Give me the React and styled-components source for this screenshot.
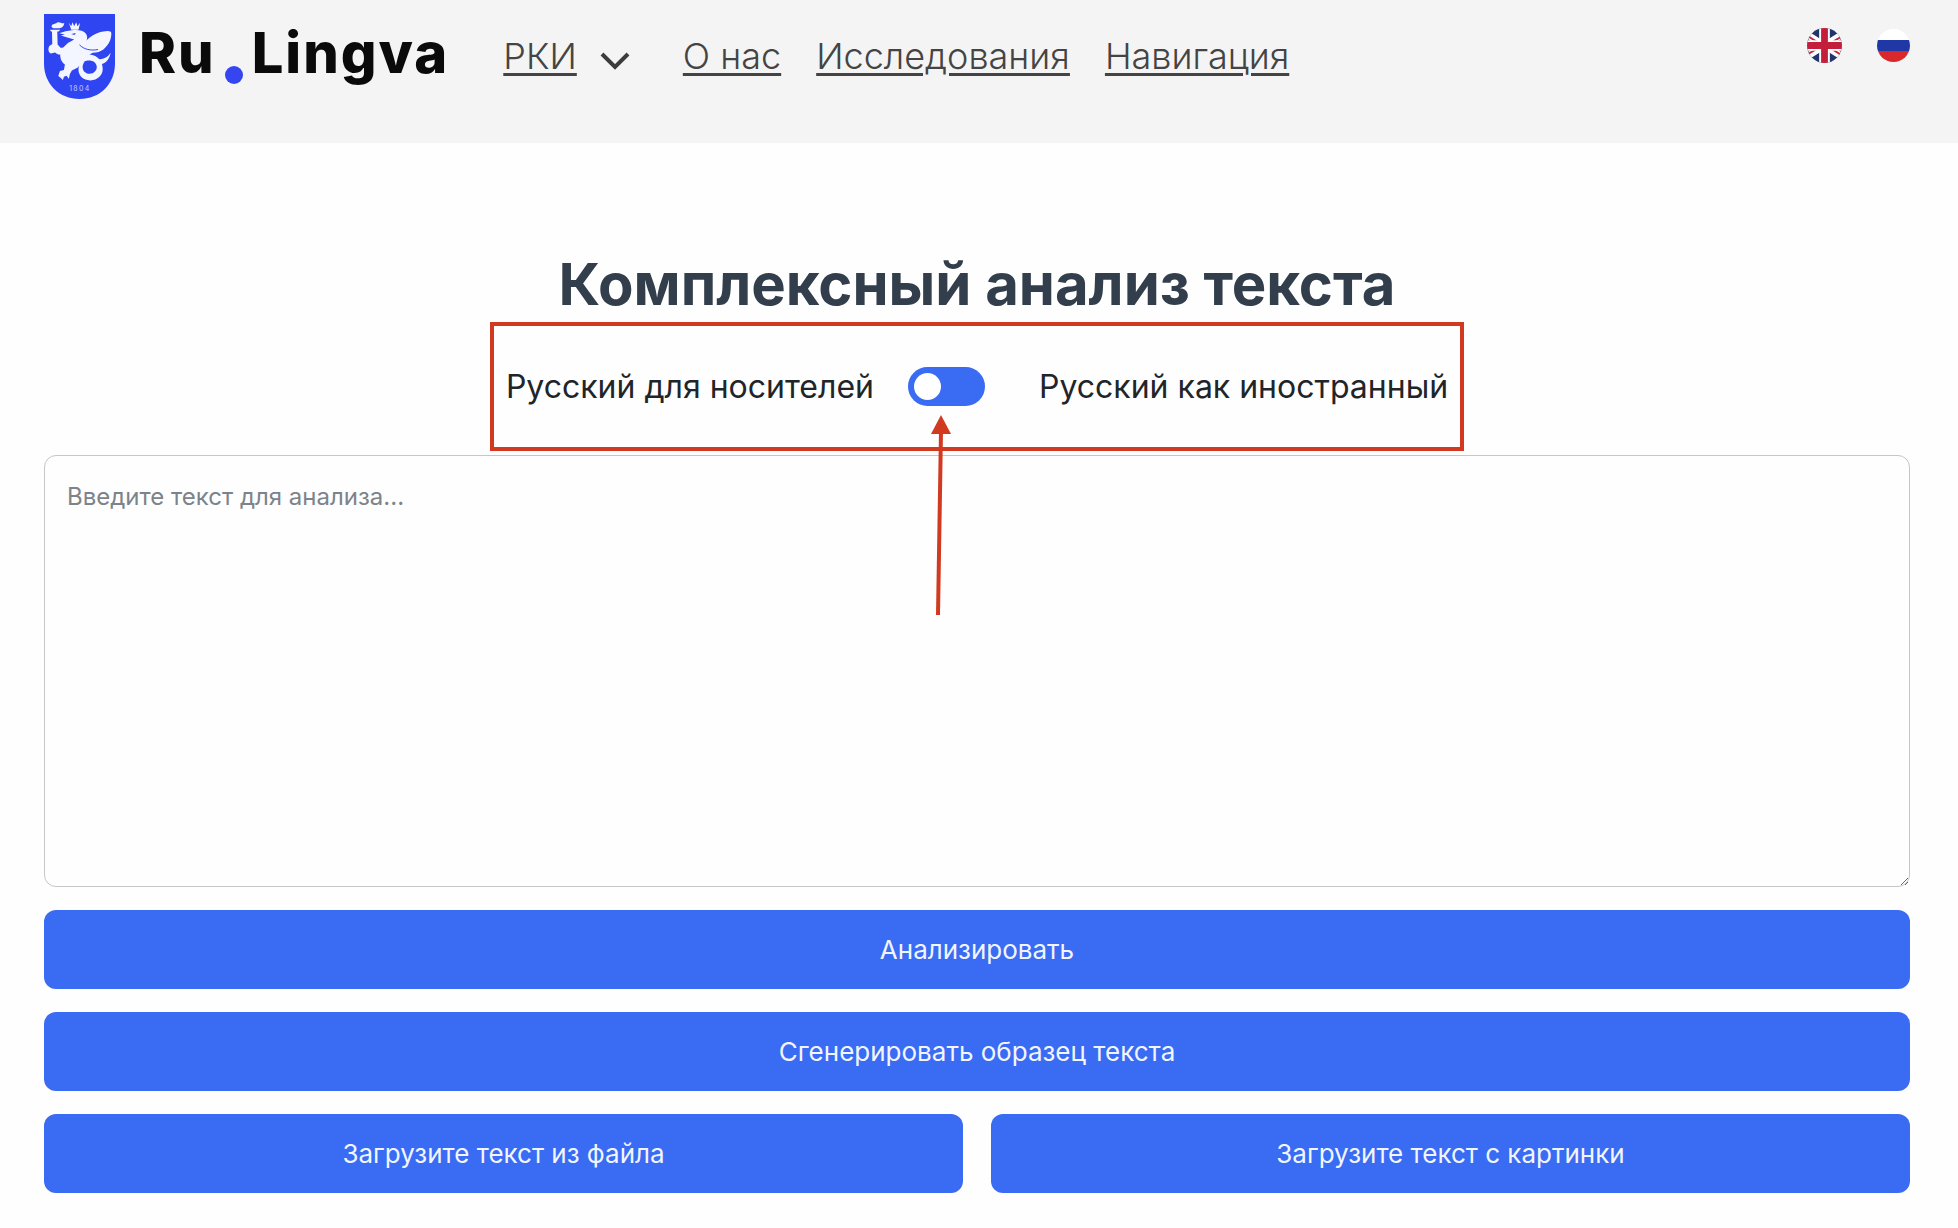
import { useState } from "react";
import styled, { createGlobalStyle } from "styled-components";

const GlobalStyle = createGlobalStyle`
    * {
        box-sizing: border-box;
    }

    body {
        margin: 0;
        background-color: #fefefe;
        color: #212529;
        font-family: Inter, "Liberation Sans", sans-serif;
    }
`

const Header = styled.header`
    display: flex;
    align-items: flex-start;
    padding: 14px 48px 44px 44px;
    background-color: #f4f4f4;
`

const Brand = styled.a`
    display: flex;
    align-items: flex-start;
    gap: 24px;
    color: #0a0a0a;
    text-decoration: none;
`

const Wordmark = styled.span`
    display: flex;
    align-items: flex-end;
    gap: 9px;
    font-size: 56px;
    font-weight: 800;
    line-height: 78px;
    letter-spacing: 2px;
`

const Dot = styled.span`
    width: 18px;
    height: 18px;
    margin-bottom: 8px;
    border-radius: 50%;
    background-color: #3546f0;
`

const Nav = styled.nav`
    display: flex;
    align-items: center;
    gap: 35px;
    margin-left: 54px;
    padding-top: 21px;
`

const NavGroup = styled.div`
    display: flex;
    align-items: flex-end;
    gap: 23px;
    margin-right: 18px;
`

const NavLink = styled.a`
    color: #444;
    font-size: 36px;
    font-weight: 300;
    line-height: 42px;
    text-decoration: underline;
    text-decoration-thickness: 3px;
    text-underline-offset: 4px;
`

const Languages = styled.div`
    display: flex;
    align-items: center;
    gap: 35px;
    margin-left: auto;
    padding-top: 14px;
`

const FlagButton = styled.button`
    display: flex;
    padding: 0;
    border: none;
    background: none;
    cursor: pointer;
`

const Main = styled.main`
    display: flex;
    flex-direction: column;
    align-items: center;
    padding: 107px 48px 36px 44px;
`

const Title = styled.h1`
    margin: 0 0 4px;
    color: #323e4c;
    font-size: 58px;
    font-weight: 700;
    line-height: 68px;
`

const ModeBox = styled.div`
    display: flex;
    align-items: center;
    padding: 40px 12px;
    border: 4px solid #d13a20;
    font-size: 32px;
    line-height: 41px;
`

const SwitchHolder = styled.span`
    position: relative;
    display: flex;
    margin: 0 54px 0 34px;
`

const Switch = styled.input`
    appearance: none;
    display: flex;
    align-items: center;
    width: 77px;
    height: 39px;
    margin: 0;
    padding: 0 6px;
    border-radius: 20px;
    background-color: #396bf3;
    cursor: pointer;

    &::before {
        content: "";
        width: 27px;
        height: 27px;
        border-radius: 50%;
        background-color: #fff;
        transition: margin .2s ease-in-out;
    }

    &:checked::before {
        margin-left: 38px;
    }
`

const Pointer = styled.svg`
    position: absolute;
    top: 48px;
    left: 23px;
    pointer-events: none;
`

const Form = styled.form`
    display: grid;
    grid-template-columns: 1fr 1fr;
    gap: 23px 28px;
    width: 100%;
    margin-top: 4px;
`

const TextInput = styled.textarea`
    grid-column: 1 / -1;
    display: block;
    width: 100%;
    height: 432px;
    padding: 24px 22px;
    border: 1px solid #c4c6c8;
    border-radius: 12px;
    background-color: #fefefe;
    color: #212529;
    font-family: inherit;
    font-size: 24px;
    line-height: 34px;
    resize: vertical;

    &::placeholder {
        color: #7c838a;
        opacity: 1;
    }
`

const Button = styled.button`
    grid-column: ${props => props.$wide ? "1 / -1" : "auto"};
    padding: 22px;
    border: none;
    border-radius: 12px;
    background-color: #396bf3;
    color: #f1f5ff;
    font-family: inherit;
    font-size: 26px;
    line-height: 35px;
    cursor: pointer;
`

function Emblem() {
    return (
        <svg width="71" height="85" viewBox="41 41 214 256" aria-hidden="true">
            <path d="M41 41H255V190C255 252 209 297 148 297S41 252 41 190Z" fill="#3045f2" />
            <g fill="#f4f6ff">
                <path d="M64 80C63 69 74 72 80 67C87 62 94 71 102 68C101 79 94 83 86 84H69Z" />
                <path d="M59 88H90L85 94H81L82 133L91 143L103 146L99 160L86 164L74 157L62 160C53 156 53 145 57 137L66 131L65 94H62Z" />
                <path d="M116 67L123 78L127 66L132 78L138 66L142 78L150 67L145 88H123Z" />
                <path d="M87 99L106 93L125 90C142 88 160 90 168 101C175 112 169 124 161 132C173 112 197 97 220 94C233 91 244 92 244 99C244 119 235 135 220 148C212 154 200 158 188 158L178 163C204 166 218 183 218 207C218 226 202 241 181 241C159 241 144 227 145 207C146 193 154 184 164 184C153 196 156 215 171 220C187 225 201 213 200 200C199 185 184 179 169 182C157 184 151 191 143 202L125 211L119 222L116 236L109 227L101 230L98 240L90 232L84 228L89 213L101 210L104 193C93 185 89 174 90 159L78 160L86 144L99 142L113 128L132 118L109 111L92 106L104 103Z" />
                <path d="M203 178C220 178 233 172 242 158C238 178 227 190 213 193Z" />
            </g>
            <path d="M148 134C162 148 182 152 204 148" fill="none" stroke="#3045f2" strokeWidth="3" />
            <path d="M123 101L137 98L133 104Z" fill="#3045f2" />
            <text x="149" y="272" textAnchor="middle" fontFamily="Inter, sans-serif" fontSize="21" letterSpacing="4" fill="#c5ceff">1804</text>
        </svg>
    );
}

function FlagUk() {
    return (
        <svg width="35" height="35" viewBox="0 0 36 36" aria-hidden="true">
            <clipPath id="uk"><circle cx="18" cy="18" r="18" /></clipPath>
            <g clipPath="url(#uk)">
                <path d="M0 0H36V36H0Z" fill="#22356f" />
                <path d="M-6 3L42 33M42 3L-6 33" stroke="#fff" strokeWidth="7" />
                <path d="M-6 4L18 19M42 5L18 19M-6 31L18 17M42 32L18 17" stroke="#c5283e" strokeWidth="2" />
                <path d="M18 0V36M0 18H36" stroke="#fff" strokeWidth="11" />
                <path d="M18 0V36M0 18H36" stroke="#c41f3a" strokeWidth="7" />
            </g>
        </svg>
    );
}

function FlagRu() {
    return (
        <svg width="33" height="33" viewBox="0 0 33 33" aria-hidden="true">
            <clipPath id="ru"><circle cx="16.5" cy="16.5" r="16.5" /></clipPath>
            <g clipPath="url(#ru)">
                <path d="M0 0H33V11H0Z" fill="#fff" />
                <path d="M0 11H33V22H0Z" fill="#2038a5" />
                <path d="M0 22H33V33H0Z" fill="#d9282c" />
            </g>
        </svg>
    );
}

function App() {
    const [foreign, setForeign] = useState(false);
    const [text, setText] = useState("");

    return (
        <>
            <GlobalStyle />
            <Header>
                <Brand href="#">
                    <Emblem />
                    <Wordmark>
                        <span>Ru</span>
                        <Dot />
                        <span>Lingva</span>
                    </Wordmark>
                </Brand>
                <Nav>
                    <NavGroup>
                        <NavLink href="#rki">РКИ</NavLink>
                        <svg width="30" height="28" viewBox="0 0 30 28" fill="none" stroke="#3c3c3c" strokeWidth="4" aria-hidden="true">
                            <path d="M2 5L15 18L28 5" />
                        </svg>
                    </NavGroup>
                    <NavLink href="#about">О нас</NavLink>
                    <NavLink href="#research">Исследования</NavLink>
                    <NavLink href="#navigation">Навигация</NavLink>
                </Nav>
                <Languages>
                    <FlagButton type="button" aria-label="English"><FlagUk /></FlagButton>
                    <FlagButton type="button" aria-label="Русский"><FlagRu /></FlagButton>
                </Languages>
            </Header>
            <Main>
                <Title>Комплексный анализ текста</Title>
                <ModeBox>
                    <label htmlFor="mode">Русский для носителей</label>
                    <SwitchHolder>
                        <Switch
                            id="mode"
                            type="checkbox"
                            role="switch"
                            checked={foreign}
                            onChange={e => setForeign(e.target.checked)}
                        />
                        <Pointer width="20" height="200" viewBox="0 0 20 200" aria-hidden="true">
                            <path d="M10 0L20 19H0Z" fill="#d13a20" />
                            <path d="M10 16L7 200" stroke="#d13a20" strokeWidth="4" />
                        </Pointer>
                    </SwitchHolder>
                    <label htmlFor="mode">Русский как иностранный</label>
                </ModeBox>
                <Form onSubmit={e => e.preventDefault()}>
                    <TextInput
                        aria-label="Текст для анализа"
                        placeholder="Введите текст для анализа..."
                        value={text}
                        onChange={e => setText(e.target.value)}
                    />
                    <Button $wide type="submit">Анализировать</Button>
                    <Button $wide type="button">Сгенерировать образец текста</Button>
                    <Button type="button">Загрузите текст из файла</Button>
                    <Button type="button">Загрузите текст с картинки</Button>
                </Form>
            </Main>
        </>
    );
}

export default App;
